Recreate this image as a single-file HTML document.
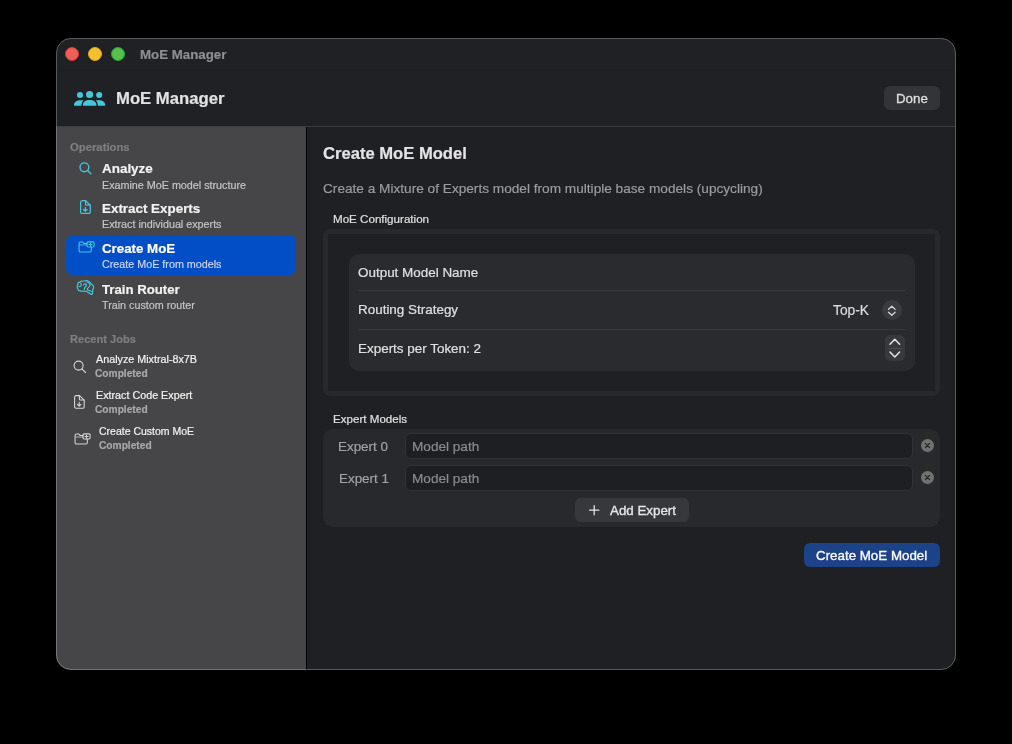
<!DOCTYPE html>
<html><head><meta charset="utf-8">
<style>
*{box-sizing:border-box;margin:0;padding:0}
html,body{width:1012px;height:744px;background:#000;overflow:hidden}
body{font-family:"Liberation Sans",sans-serif;position:relative;-webkit-font-smoothing:antialiased}
.a{position:absolute}
.t{position:absolute;white-space:nowrap;line-height:1;will-change:transform;-webkit-text-stroke:0.2px currentColor}
svg{position:absolute;overflow:visible}
#win{left:56px;top:38px;width:900px;height:632px;border-radius:15px;background:#202124;overflow:hidden}
#t_cbtn,#t_add,#t_done{-webkit-text-stroke:0.35px currentColor}
#wb{left:56px;top:38px;width:900px;height:632px;border-radius:15px;border:1px solid rgba(255,255,255,0.26);pointer-events:none}
</style></head><body>
<div id="win" class="a">
  <div class="a" style="left:0px;top:89px;width:250px;height:543px;background:#464648"></div>
  <div class="a" style="left:250px;top:89px;width:1px;height:543px;background:#000"></div>
  <div class="a" style="left:251px;top:89px;width:649px;height:543px;background:#1f2023"></div>
  <div class="a" style="left:0px;top:88px;width:900px;height:1px;background:#3b3b3e"></div>
  <div class="a" style="left:0px;top:31px;width:900px;height:1px;background:#1f1f1f"></div>
</div>

<!-- traffic lights -->
<div class="a" style="left:65px;top:47px;width:14px;height:14px;border-radius:50%;background:#ef5f5a;border:1px solid #e2352f"></div>
<div class="a" style="left:88px;top:47px;width:14px;height:14px;border-radius:50%;background:#f5c02f;border:1px solid #e1a31a"></div>
<div class="a" style="left:111px;top:47px;width:14px;height:14px;border-radius:50%;background:#57c04c;border:1px solid #28a62b"></div>

<!-- header icon -->
<svg style="left:74px;top:90px" width="32" height="17" viewBox="0 0 32 17">
  <g fill="#45c6d9">
    <circle cx="15.6" cy="4.5" r="3.6"/>
    <circle cx="6" cy="5" r="3.05"/>
    <circle cx="25.2" cy="5" r="3.05"/>
    <path d="M8.9 15.2 C8.9 11.9 11.8 10.1 15.65 10.1 C19.5 10.1 22.4 11.9 22.4 15.2 Q22.4 15.8 21.8 15.8 H9.5 Q8.9 15.8 8.9 15.2 Z"/>
    <path d="M0 15.2 C0 12.5 2.3 10.2 6 10.2 H9.6 C8.3 11.5 7.5 13.2 7.4 15.8 H0.6 Q0 15.8 0 15.2 Z"/>
    <path d="M31.3 15.2 C31.3 12.5 29 10.2 25.3 10.2 H21.7 C23 11.5 23.8 13.2 23.9 15.8 H30.7 Q31.3 15.8 31.3 15.2 Z"/>
  </g>
</svg>
<div class="a" style="left:884px;top:86px;width:56px;height:24px;border-radius:6px;background:#333437"></div>

<!-- sidebar selection -->
<div class="a" style="left:66px;top:235px;width:230px;height:40px;border-radius:7px;background:#024ec6"></div>

<!-- sidebar icons -->
<svg style="left:78.6px;top:162.4px" width="13" height="13" viewBox="0 0 13 13">
  <g fill="none" stroke="#45c6d9" stroke-width="1.4" stroke-linecap="round">
    <circle cx="5.4" cy="5.3" r="4.4"/><path d="M8.6 8.5 L11.8 11.7"/>
  </g>
</svg>
<svg style="left:80px;top:200px" width="12" height="15" viewBox="0 0 12 15">
  <g fill="none" stroke="#45c6d9" stroke-width="1.25" stroke-linejoin="round" stroke-linecap="round">
    <path d="M2.2 0.7 H5.6 L10.3 5.2 V11.9 A1.55 1.55 0 0 1 8.75 13.45 H2.2 A1.55 1.55 0 0 1 0.65 11.9 V2.25 A1.55 1.55 0 0 1 2.2 0.7 Z"/>
    <path d="M5.5 0.9 V4.3 A0.8 0.8 0 0 0 6.3 5.1 H10.1"/>
    <path d="M5.3 7.4 V11.2 M3.5 9.5 L5.3 11.3 L7.1 9.5"/>
  </g>
</svg>
<svg style="left:78px;top:240px" width="18" height="14" viewBox="0 0 18 14">
  <g fill="none" stroke="#45c6d9" stroke-width="1.1" stroke-linejoin="round" stroke-linecap="round">
    <path d="M9 3.5 H6.3 L4.8 2.05 H2.5 A1.45 1.45 0 0 0 1.05 3.5 V10.5 A1.45 1.45 0 0 0 2.5 11.95 H11.9 A1.45 1.45 0 0 0 13.35 10.5 V7.05"/>
    <path d="M1.6 4.9 H9" stroke-opacity="0.75"/>
    <rect x="9" y="1.85" width="7.1" height="5.2" rx="1.2"/>
    <path d="M12.5 2.9 V6 M10.95 4.45 H14.05"/>
  </g>
</svg>
<svg style="left:74px;top:278px" width="24" height="20" viewBox="0 0 24 20">
  <g fill="none" stroke="#45c6d9" stroke-width="1.2" stroke-linejoin="round" stroke-linecap="round">
    <path d="M3.3 9.1 C3 8.2 3.2 7.4 3.7 6.9 C3.7 5.2 4.7 3.9 6.3 3.8 C6.9 3.2 7.8 3.1 8.4 3.4 C9.3 2.7 10.5 2.6 11.4 3.1 C12.4 2.6 14 2.7 15 3.9 C16.2 4.1 17.1 5.1 17.3 6.3 C18.7 6.8 19.7 7.9 19.6 9.3 C19.6 10.3 19.2 11 18.7 11.5 L18.6 14.9 C18.6 15.9 17.9 16.5 17.2 16.4 C16.4 16.2 16 15.7 15.8 15.3 C15 15.2 14.3 14.8 13.9 14.1 C13.2 14.1 12.5 13.6 12.2 13 C11.3 13.4 10.1 13.4 9.3 13 C8.4 13.5 7.2 13.4 6.5 12.8 C5.3 12.9 4.2 12.2 4 11.1 C3.4 10.7 3.2 10 3.3 9.1 Z"/>
    <path d="M6.6 5.2 C7.3 5.9 7.6 6.8 7.3 7.6 C6.9 8.4 5.8 8.7 4.9 8.5"/>
    <path d="M9.6 6.9 C10 5.8 11.4 5.6 12.1 6.2 C12.8 6.9 12.3 8 11.5 8.7 C10.7 9.5 10.2 10.4 10.3 11.6"/>
    <path d="M13 4 C14.6 4.4 16.1 5.6 16 7.2 C15.9 8.8 14.3 9.3 13.6 10.4 C13.1 11.2 13.3 11.9 14.2 12.2 C15.3 12.4 16.5 12.6 17.4 13.4"/>
  </g>
</svg>

<!-- recent job icons -->
<svg style="left:72.5px;top:360px" width="14" height="14" viewBox="0 0 14 14">
  <g fill="none" stroke="#d6d6d7" stroke-width="1.1" stroke-linecap="round">
    <circle cx="5.6" cy="5.6" r="4.5"/><path d="M8.9 8.9 L12.5 12.5"/>
  </g>
</svg>
<svg style="left:74px;top:395px" width="12" height="15" viewBox="0 0 12 15">
  <g fill="none" stroke="#d6d6d7" stroke-width="1.1" stroke-linejoin="round" stroke-linecap="round">
    <path d="M2.1 0.6 H5.5 L10.2 5.1 V11.8 A1.5 1.5 0 0 1 8.7 13.3 H2.1 A1.5 1.5 0 0 1 0.6 11.8 V2.1 A1.5 1.5 0 0 1 2.1 0.6 Z"/>
    <path d="M5.4 0.8 V4.2 A0.8 0.8 0 0 0 6.2 5 H10"/>
    <path d="M5.2 7.3 V11.1 M3.4 9.4 L5.2 11.2 L7 9.4"/>
  </g>
</svg>
<svg style="left:73.8px;top:431.7px" width="18" height="14" viewBox="0 0 18 14">
  <g fill="none" stroke="#d6d6d7" stroke-width="1.05" stroke-linejoin="round" stroke-linecap="round">
    <path d="M9 3.5 H6.3 L4.8 2.05 H2.5 A1.45 1.45 0 0 0 1.05 3.5 V10.5 A1.45 1.45 0 0 0 2.5 11.95 H11.9 A1.45 1.45 0 0 0 13.35 10.5 V7.05"/>
    <path d="M1.6 4.9 H9" stroke-opacity="0.75"/>
    <rect x="9" y="1.85" width="7.1" height="5.2" rx="1.2"/>
    <path d="M12.5 2.9 V6 M10.95 4.45 H14.05"/>
  </g>
</svg>

<!-- MoE Configuration group -->
<div class="a" style="left:323px;top:229px;width:617px;height:167px;border-radius:7px;background:#28292c"></div>
<div class="a" style="left:328px;top:234px;width:607px;height:157px;border-radius:0px;background:#1f2023"></div>
<div class="a" style="left:349px;top:254px;width:566px;height:117px;border-radius:10px;background:#2a2b2e"></div>
<div class="a" style="left:358px;top:290px;width:547px;height:1px;background:#38393c"></div>
<div class="a" style="left:358px;top:329px;width:547px;height:1px;background:#38393c"></div>
<!-- popup button -->
<div class="a" style="left:882px;top:300px;width:20px;height:20px;border-radius:50%;background:#3a3b3e"></div>
<svg style="left:882px;top:300px" width="20" height="20" viewBox="0 0 20 20">
  <g fill="none" stroke="#d4d4d5" stroke-width="1.3" stroke-linecap="round" stroke-linejoin="round">
    <path d="M6.5 9.3 L9.8 6.3 L13.1 9.3"/><path d="M6.5 12.3 L9.8 15.3 L13.1 12.3"/>
  </g>
</svg>
<!-- stepper -->
<div class="a" style="left:885px;top:335px;width:20px;height:26px;border-radius:5px;background:#38393c"></div>
<div class="a" style="left:888px;top:348px;width:14px;height:1px;background:#4a4b4e"></div>
<svg style="left:885px;top:335px" width="20" height="26" viewBox="0 0 20 26">
  <g fill="none" stroke="#e6e6e7" stroke-width="1.5" stroke-linecap="round" stroke-linejoin="round">
    <path d="M5 9.2 L9.8 4.2 L14.6 9.2"/><path d="M5 17 L9.8 22 L14.6 17"/>
  </g>
</svg>

<!-- Expert models card -->
<div class="a" style="left:323px;top:429px;width:617px;height:98px;border-radius:10px;background:#28292c"></div>
<div class="a" style="left:405px;top:433px;width:508px;height:26px;border-radius:6px;background:#1e1f22;border:1px solid #313235"></div>
<div class="a" style="left:405px;top:465px;width:508px;height:26px;border-radius:6px;background:#1e1f22;border:1px solid #313235"></div>
<svg style="left:921px;top:439px" width="13" height="13" viewBox="0 0 13 13">
  <circle cx="6.5" cy="6.5" r="6.5" fill="#727273"/>
  <path d="M4.3 4.3 L8.7 8.7 M8.7 4.3 L4.3 8.7" stroke="#1f1f20" stroke-width="1.05" stroke-linecap="round"/>
</svg>
<svg style="left:921px;top:471px" width="13" height="13" viewBox="0 0 13 13">
  <circle cx="6.5" cy="6.5" r="6.5" fill="#727273"/>
  <path d="M4.3 4.3 L8.7 8.7 M8.7 4.3 L4.3 8.7" stroke="#1f1f20" stroke-width="1.05" stroke-linecap="round"/>
</svg>
<div class="a" style="left:575px;top:498px;width:114px;height:24px;border-radius:6px;background:#37383b"></div>
<svg style="left:589px;top:505px" width="11" height="11" viewBox="0 0 11 11">
  <path d="M5.2 0.6 V9.8 M0.6 5.2 H9.8" stroke="#e6e6e7" stroke-width="1.25" stroke-linecap="round"/>
</svg>

<!-- Create button -->
<div class="a" style="left:804px;top:543px;width:136px;height:24px;border-radius:6px;background:#1c4288"></div>

<div id="t_title" class="t" style="left:140.4px;top:47.7px;font-size:13.3px;font-weight:bold;color:#8e8e90">MoE Manager</div>
<div id="t_head" class="t" style="left:115.7px;top:91.2px;font-size:16.7px;font-weight:bold;color:#e2e2e3">MoE Manager</div>
<div id="t_done" class="t" style="left:895.6px;top:92.0px;font-size:13.3px;font-weight:normal;color:#dedede">Done</div>
<div id="t_ops" class="t" style="left:70.3px;top:141.6px;font-size:11.3px;font-weight:bold;color:#7f7f82">Operations</div>
<div id="t_an" class="t" style="left:101.5px;top:162.19px;font-size:13.45px;font-weight:bold;color:#f2f2f2">Analyze</div>
<div id="t_an2" class="t" style="left:101.5px;top:179.5px;font-size:10.75px;font-weight:normal;color:#c4c4c5">Examine MoE model structure</div>
<div id="t_ex" class="t" style="left:102.1px;top:202.26px;font-size:13.4px;font-weight:bold;color:#f2f2f2">Extract Experts</div>
<div id="t_ex2" class="t" style="left:102.1px;top:219.4px;font-size:10.75px;font-weight:normal;color:#c4c4c5">Extract individual experts</div>
<div id="t_cr" class="t" style="left:102.1px;top:242.07px;font-size:13.3px;font-weight:bold;color:#ffffff">Create MoE</div>
<div id="t_cr2" class="t" style="left:102.1px;top:259.38px;font-size:10.75px;font-weight:normal;color:#c9d5f0">Create MoE from models</div>
<div id="t_tr" class="t" style="left:102.0px;top:283.29px;font-size:13.2px;font-weight:bold;color:#f2f2f2">Train Router</div>
<div id="t_tr2" class="t" style="left:101.6px;top:300.48px;font-size:10.75px;font-weight:normal;color:#c4c4c5">Train custom router</div>
<div id="t_rj" class="t" style="left:70.2px;top:333.7px;font-size:11.1px;font-weight:bold;color:#7f7f82">Recent Jobs</div>
<div id="t_j1" class="t" style="left:95.7px;top:353.8px;font-size:10.75px;font-weight:normal;color:#f2f2f2">Analyze Mixtral-8x7B</div>
<div id="t_j1s" class="t" style="left:95.3px;top:368.67px;font-size:10.2px;font-weight:bold;color:#a9a9aa">Completed</div>
<div id="t_j2" class="t" style="left:95.7px;top:390.0px;font-size:10.75px;font-weight:normal;color:#f2f2f2">Extract Code Expert</div>
<div id="t_j2s" class="t" style="left:95.3px;top:404.87px;font-size:10.2px;font-weight:bold;color:#a9a9aa">Completed</div>
<div id="t_j3" class="t" style="left:98.5px;top:426.32px;font-size:10.5px;font-weight:normal;color:#f2f2f2">Create Custom MoE</div>
<div id="t_j3s" class="t" style="left:98.9px;top:441.4px;font-size:10.2px;font-weight:bold;color:#a9a9aa">Completed</div>
<div id="t_cmm" class="t" style="left:322.6px;top:146.34px;font-size:16.6px;font-weight:bold;color:#e4e4e5">Create MoE Model</div>
<div id="t_sub" class="t" style="left:323.0px;top:182.0px;font-size:13.65px;font-weight:normal;color:#9b9b9d">Create a Mixture of Experts model from multiple base models (upcycling)</div>
<div id="t_cfg" class="t" style="left:332.7px;top:213.14px;font-size:11.6px;font-weight:normal;color:#e0e0e1">MoE Configuration</div>
<div id="t_omn" class="t" style="left:357.7px;top:265.75px;font-size:13.45px;font-weight:normal;color:#e0e0e1">Output Model Name</div>
<div id="t_rs" class="t" style="left:357.7px;top:302.55px;font-size:13.45px;font-weight:normal;color:#e0e0e1">Routing Strategy</div>
<div id="t_ept" class="t" style="left:357.7px;top:341.85px;font-size:13.45px;font-weight:normal;color:#e0e0e1">Experts per Token: 2</div>
<div id="t_topk" class="t" style="left:832.5px;top:303.89px;font-size:13.8px;font-weight:normal;color:#dcdcdd">Top-K</div>
<div id="t_em" class="t" style="left:333.4px;top:413.24px;font-size:11.6px;font-weight:normal;color:#e0e0e1">Expert Models</div>
<div id="t_e0" class="t" style="left:337.5px;top:440.2px;font-size:13.4px;font-weight:normal;color:#a2a2a4">Expert 0</div>
<div id="t_e1" class="t" style="left:339.2px;top:472.2px;font-size:13.4px;font-weight:normal;color:#a2a2a4">Expert 1</div>
<div id="t_mp0" class="t" style="left:411.6px;top:440.1px;font-size:13.6px;font-weight:normal;color:#8c8c8e">Model path</div>
<div id="t_mp1" class="t" style="left:411.6px;top:472.1px;font-size:13.6px;font-weight:normal;color:#8c8c8e">Model path</div>
<div id="t_add" class="t" style="left:610.3px;top:503.9px;font-size:13.35px;font-weight:normal;color:#e6e6e7">Add Expert</div>
<div id="t_cbtn" class="t" style="left:815.6px;top:549.1px;font-size:13.35px;font-weight:normal;color:#fcfcfc">Create MoE Model</div>
<div id="wb" class="a"></div>
</body></html>
